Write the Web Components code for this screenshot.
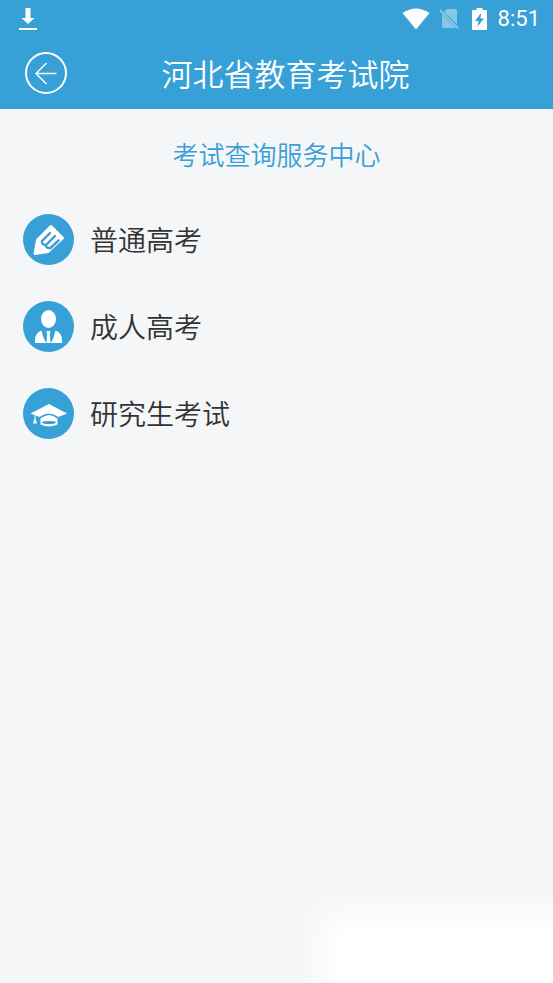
<!DOCTYPE html>
<html lang="zh-CN">
<head>
<meta charset="utf-8">
<meta name="viewport" content="width=device-width, initial-scale=1">
<title>河北省教育考试院</title>
<style>
html, body { margin: 0; min-height: 100%; }
body { background: #f4f6f8; font-family: "Noto Sans CJK SC", sans-serif; }
</style>
</head>
<body>
<exam-app>
  <status-bar slot="status">8:51</status-bar>
  <title-bar slot="header">河北省教育考试院</title-bar>
  <section-heading>考试查询服务中心</section-heading>
  <service-list>
    <service-item icon="pencil">普通高考</service-item>
    <service-item icon="person">成人高考</service-item>
    <service-item icon="cap">研究生考试</service-item>
  </service-list>
</exam-app>
<script>
function define(name, html, setup) {
  const template = document.createElement('template');
  template.innerHTML = html;
  customElements.define(name, class extends HTMLElement {
    constructor() {
      super();
      this.attachShadow({ mode: 'open' }).append(template.content.cloneNode(true));
    }
    connectedCallback() { if (setup) setup(this, this.shadowRoot); }
  });
}

define('exam-app', `
<style>
:host { display: flex; flex-direction: column; position: relative; min-height: 100vh; overflow: hidden; --brand: #37a0d6; }
header { background: var(--brand); color: #fff; }
main { flex: 1; padding: 25px 23px; }
.glow { position: absolute; right: 0; bottom: 0; width: 256px; height: 94px; background: #fff; mask-image: linear-gradient(to right, transparent, #000 48px), linear-gradient(to bottom, transparent, #000 48px); mask-composite: intersect; pointer-events: none; }
</style>
<header><slot name="status"></slot><slot name="header"></slot></header>
<main><slot></slot></main>
<div class="glow"></div>`);

define('status-bar', `
<style>
:host { display: flex; align-items: center; height: 38px; padding: 0 13px 0 18px; font: 400 22px/38px Roboto, sans-serif; }
svg { display: block; fill: currentColor; flex: none; }
.load { margin-right: auto; }
.wifi { margin-right: 9px; }
.sim { margin-right: 12px; opacity: .4; }
.battery { margin-right: 11px; }
</style>
<svg class="load" width="20" height="24" viewBox="0 0 20 24"><path d="M7.500 1h5v10h4L10 17 3.500 11h4zM1 21h18v2H1z"/></svg>
<svg class="wifi" width="28" height="22" viewBox="0 0 28 22"><path d="M.5 5Q14-4 27.500 5L14 21.500z"/></svg>
<svg class="sim" width="21" height="22" viewBox="0 0 21 22"><path d="M8 1h8q2 0 2 2v13L5 4zM3 6l14 14H5q-2 0-2-2z"/><path d="M1 2l18.500 18.500" fill="none" stroke="currentColor" stroke-width="1.800"/></svg>
<svg class="battery" width="15" height="24" viewBox="0 0 15 24"><path fill-rule="evenodd" d="M4.500 1h6v2H14q1 0 1 1v18q0 1-1 1H1q-1 0-1-1V4q0-1 1-1h3.500zM9 6l-6 8h3.500l-1 5.500 6.500-8H8.500z"/></svg>
<slot></slot>`);

define('title-bar', `
<style>
:host { display: flex; align-items: center; box-sizing: border-box; height: 71px; padding: 0 50px 2px 24px; }
button { flex: none; padding: 0; border: 0; background: none; color: inherit; cursor: pointer; }
svg { display: block; }
h1 { flex: 1; margin: 0; font-size: 31px; line-height: 42px; font-weight: 350; text-align: center; }
</style>
<button type="button" aria-label="返回"><svg width="44" height="44" viewBox="0 0 44 44" fill="none" stroke="currentColor"><circle cx="22" cy="22" r="20" stroke-width="2"/><path d="M32.500 22.500H12M22.500 12L12 22.500 22.500 33" stroke-width="1.400"/></svg></button>
<h1><slot></slot></h1>`);

define('section-heading', `
<style>
:host { display: block; }
h2 { margin: 0; color: var(--brand); font-size: 26px; line-height: 40px; font-weight: 350; text-align: center; }
</style>
<h2><slot></slot></h2>`);

define('service-list', `
<style>
:host { display: block; margin-top: 40px; }
nav { display: flex; flex-direction: column; gap: 36px; }
</style>
<nav><slot></slot></nav>`);

const icons = {
  pencil: '<path fill="#fff" stroke="#fff" stroke-width="3" stroke-linejoin="round" d="M28 12.500L39.500 24 25 37.500 12 39.500 14.500 26z"/><path fill="none" stroke="#37a0d6" stroke-width="2.400" stroke-linecap="round" d="M19 27L27 19M23 31L32 22M27.500 34L35.500 26.500M19 27Q18.500 31 23 31Q22.500 34.500 27.500 34"/>',
  person: '<ellipse cx="25.500" cy="18" rx="7.500" ry="9" fill="#fff"/><path fill="#fff" d="M18.500 29.500q2 9 5 12.500H12v-3q0-7 6.500-9.500zM32.500 29.500q-2 9-5 12.500H39v-3q0-7-6.500-9.500zM24 30h3l.5 1.500-.7 1.500.8 9h-4.200l.8-9-.7-1.500z"/>',
  cap: '<path fill="#fff" d="M7.500 25.500L26 16l18 9.500-8.500 3.500q-10-7-19 0zM17.500 30.500q8.500-7 17 0v6q-8.500 4-17 0z"/><ellipse cx="26" cy="34.500" rx="7" ry="1.600" fill="#37a0d6"/><path d="M12 26v8" stroke="#fff"/><path fill="#fff" d="M11.500 31h1l1.500 4.500h-4z"/>'
};
define('service-item', `
<style>
:host { display: block; }
a { display: flex; align-items: center; gap: 16px; color: #333; text-decoration: none; font-size: 28px; font-weight: 350; line-height: 40px; }
span { padding-bottom: 2px; }
svg { display: block; flex: none; }
</style>
<a href="#"><svg width="51" height="51" viewBox="0 0 51 51" aria-hidden="true"><circle cx="25.500" cy="25.500" r="25.500" fill="#37a0d6"/><g></g></svg><span><slot></slot></span></a>`,
(host, root) => { root.querySelector('g').innerHTML = icons[host.getAttribute('icon')]; });
</script>
</body>
</html>
